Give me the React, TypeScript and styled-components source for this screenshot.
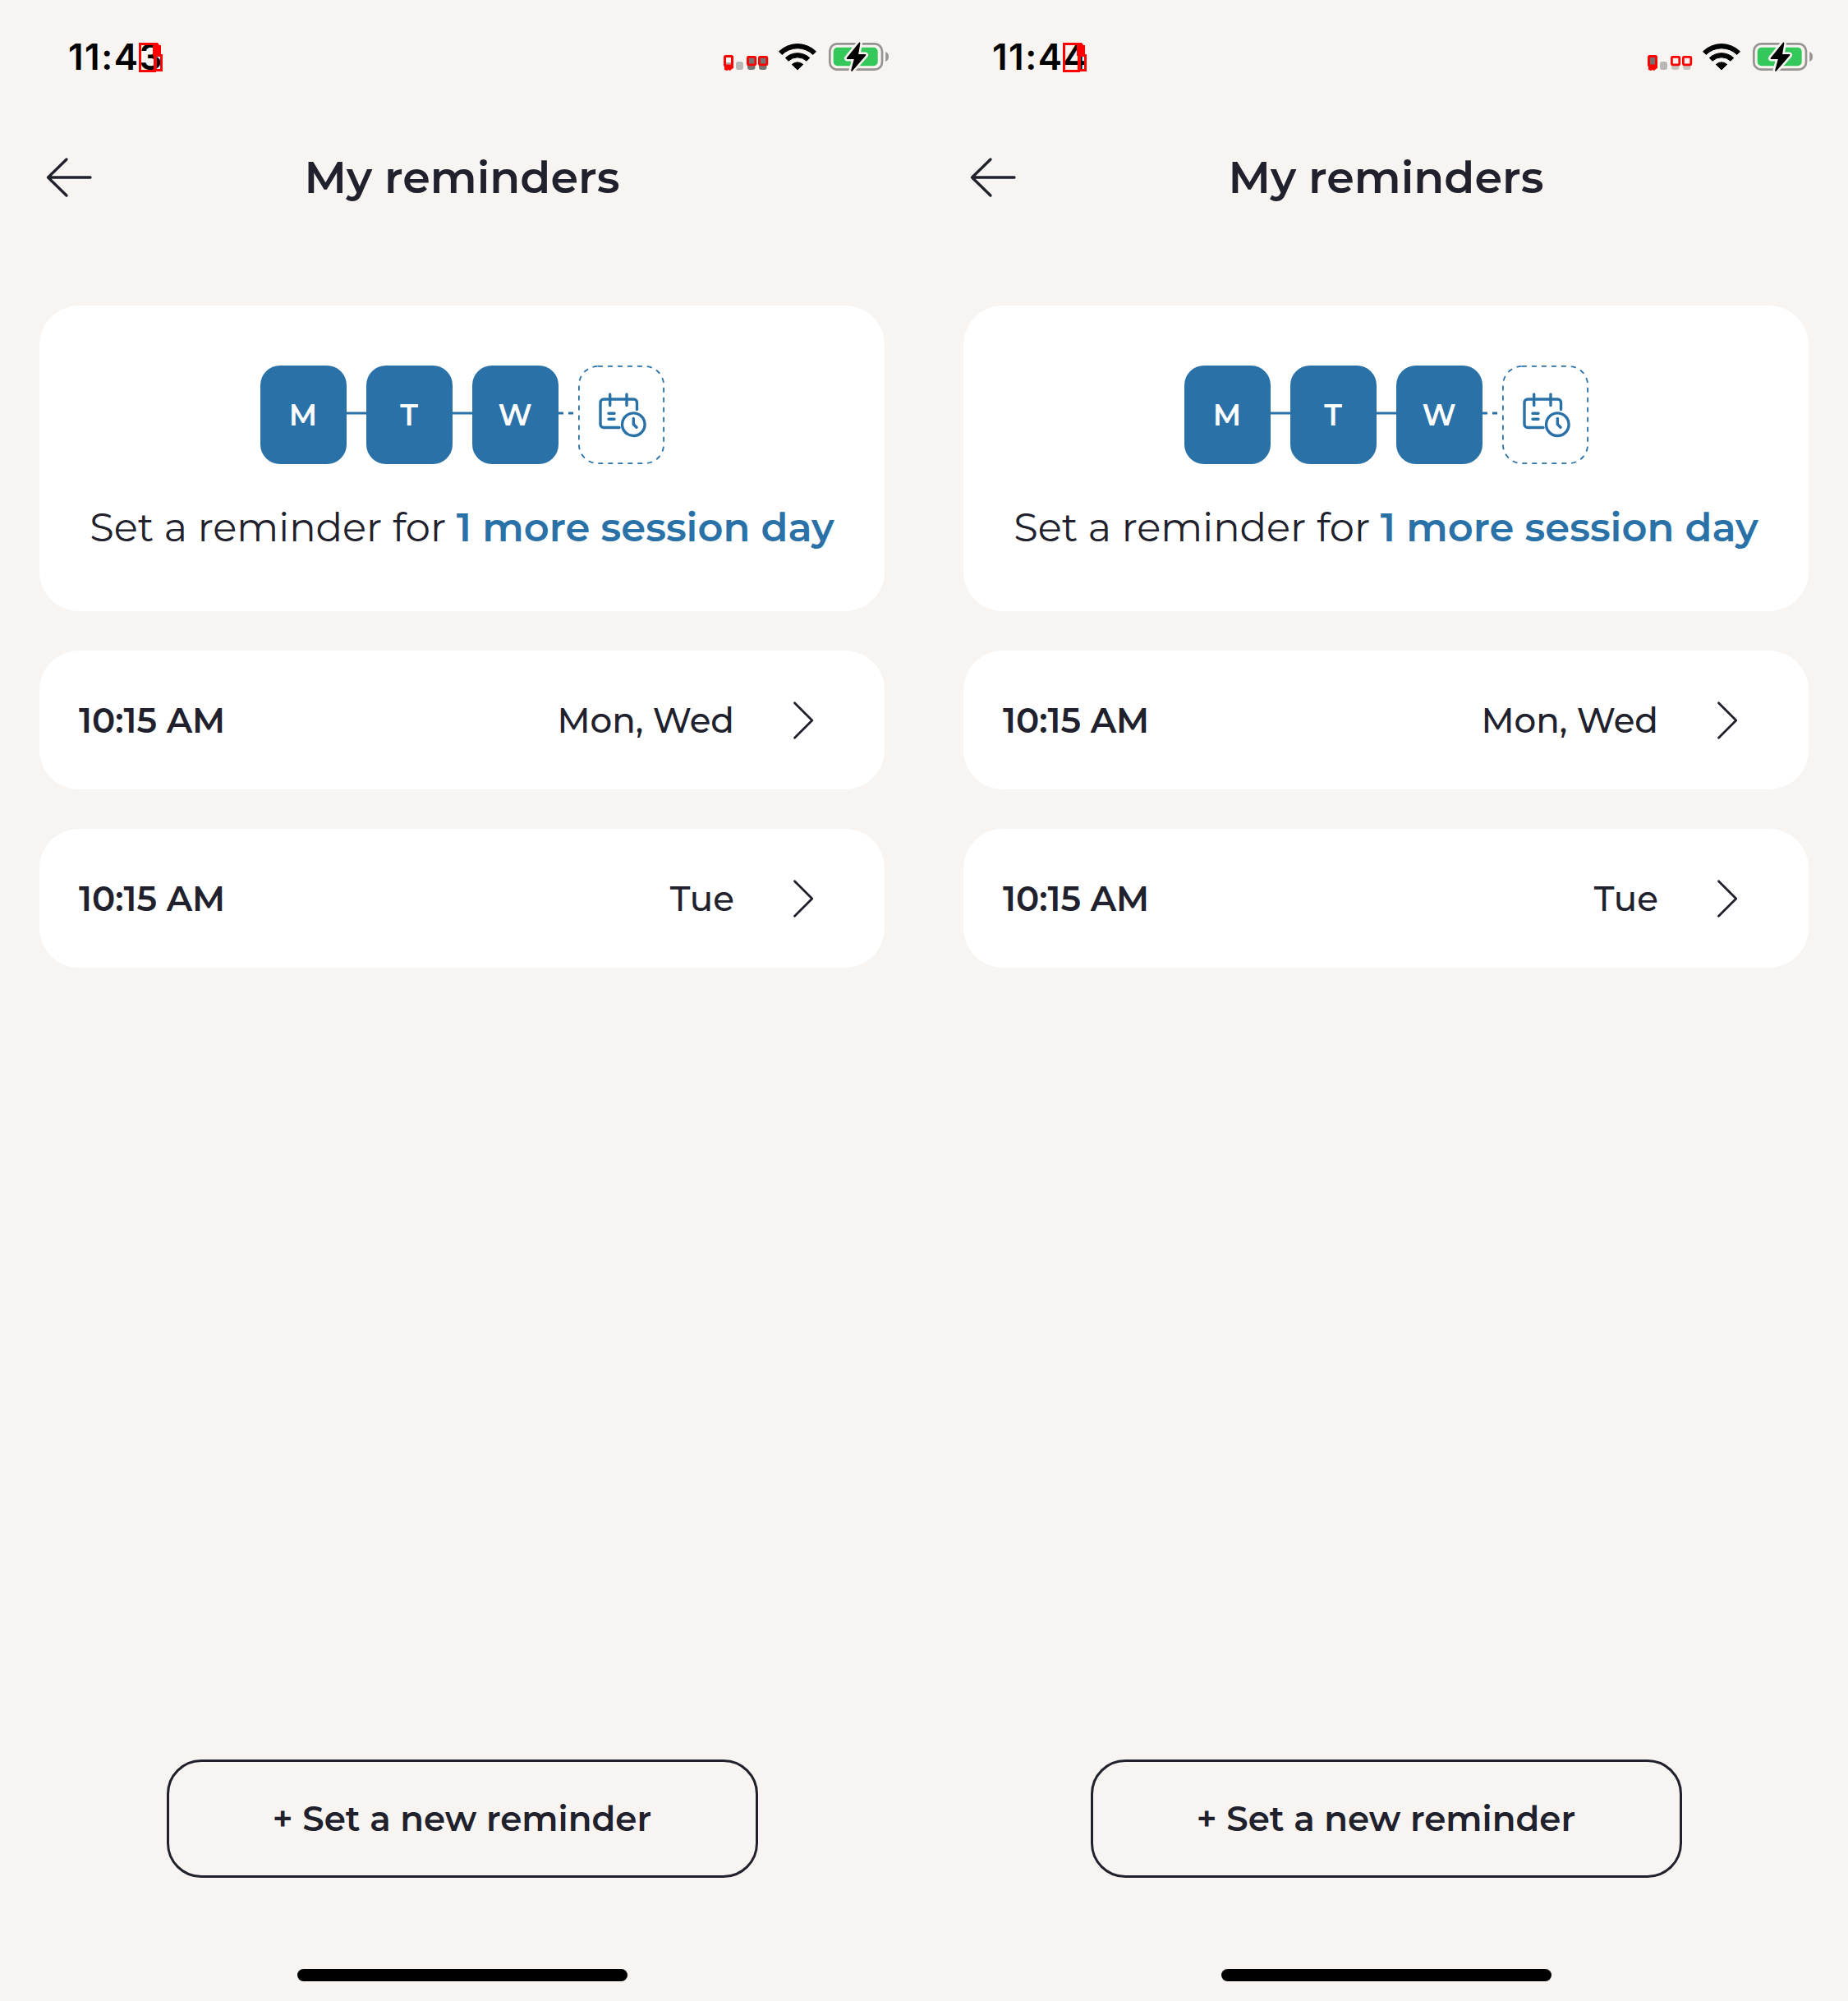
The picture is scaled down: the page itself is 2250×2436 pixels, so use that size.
import React from "react";
import styled, { createGlobalStyle } from "styled-components";

const color = {
  canvas: "#f7f4f1",
  card: "#ffffff",
  ink: "#20212c",
  blue: "#2a71a8",
  mark: "#ff0000",
  battery: "#34c759",
  outline: "#969391",
};

const GlobalStyle = createGlobalStyle`
  *, *::before, *::after { box-sizing: border-box; }
  body {
    margin: 0;
    background: ${color.canvas};
    color: ${color.ink};
    font-family: Montserrat, Inter, "Open Sans", sans-serif;
  }
  svg { display: block; flex: none; overflow: visible; }
`;

const Board = styled.div`
  display: flex;
  width: 2250px;
  height: 2436px;
  overflow: hidden;
`;

const Phone = styled.section`
  display: flex;
  flex-direction: column;
  width: 1125px;
  height: 2436px;
  background: ${color.canvas};
`;

const StatusBar = styled.div`
  display: flex;
  align-items: center;
  justify-content: space-between;
  height: 138px;
  padding: 0 43px 0 83px;
`;

const Clock = styled.time`
  position: relative;
  color: #000;
  font: 600 44px/54px Inter, "Liberation Sans", sans-serif;
  letter-spacing: 1.5px;
`;

const ClockMark = styled.svg`
  position: absolute;
  left: 85px;
  top: 9px;
`;

const StatusIcons = styled.div`
  display: flex;
  align-items: center;
`;

const SignalSlot = styled.div`
  padding-top: 15px;
`;

const WifiSlot = styled.div`
  margin: 0 14px 0 12px;
`;

const Header = styled.header`
  display: grid;
  grid-template-columns: 110px 1fr 110px;
  align-items: center;
  height: 156px;
`;

const BackButton = styled.button`
  display: flex;
  align-items: center;
  padding: 0 0 0 56px;
  border: 0;
  background: none;
`;

const Title = styled.h1`
  margin: 0;
  font-size: 54px;
  font-weight: 600;
  line-height: 66px;
  text-align: center;
`;

const Content = styled.main`
  display: flex;
  flex: 1;
  flex-direction: column;
  gap: 48px;
  padding: 78px 48px 0;
`;

const SummaryCard = styled.div`
  display: flex;
  flex-direction: column;
  align-items: center;
  height: 372px;
  padding-top: 73px;
  border-radius: 48px;
  background: ${color.card};
`;

const DayChain = styled.div`
  display: flex;
  align-items: flex-start;
`;

const DayTile = styled.div`
  display: flex;
  align-items: center;
  justify-content: center;
  width: 105px;
  height: 120px;
  border-radius: 24px;
  background: ${color.blue};
  color: #fff;
  font-size: 36px;
  font-weight: 600;
  line-height: 44px;
`;

const Connector = styled.div<{ $dashed?: boolean }>`
  width: 24px;
  height: 3px;
  margin-top: 56px;
  transform: translateY(0.5px);
  background: ${(p) =>
    p.$dashed
      ? `repeating-linear-gradient(90deg, ${color.blue} 0 6px, transparent 6px 12px)`
      : color.blue};
`;

const Summary = styled.p`
  margin: 47px 0 0;
  font-size: 48px;
  font-weight: 400;
  line-height: 60px;
  white-space: nowrap;
`;

const Highlight = styled.strong`
  color: ${color.blue};
  font-weight: 600;
`;

const ReminderRow = styled.div`
  display: flex;
  align-items: center;
  height: 169px;
  padding: 0 86px 0 48px;
  border-radius: 48px;
  background: ${color.card};
  font-size: 42px;
  line-height: 52px;
`;

const ReminderTime = styled.span`
  flex: 1;
  font-weight: 600;
`;

const ReminderDays = styled.span`
  margin-right: 71px;
  font-weight: 500;
`;

const Footer = styled.footer`
  display: flex;
  flex-direction: column;
  align-items: center;
  justify-content: space-between;
  height: 294px;
  padding-bottom: 24px;
`;

const NewReminderButton = styled.button`
  width: 720px;
  height: 144px;
  padding: 0;
  border: 3px solid ${color.ink};
  border-radius: 42px;
  background: none;
  color: ${color.ink};
  font: inherit;
  font-size: 42px;
  font-weight: 600;
  line-height: 52px;
`;

const HomeIndicator = styled.div`
  width: 402px;
  height: 15px;
  border-radius: 8px;
  background: #000;
`;

function ClockHighlight() {
  return (
    <ClockMark width="32" height="38" viewBox="168 51 32 38" fill="none" stroke={color.mark}>
      <rect x="170.5" y="53.5" width="18" height="33" strokeWidth="3" />
      <path d="M186 52h6l2 3h2v13h-10z" fill={color.mark} stroke="none" />
      <path d="M189 66v20.5M189.5 67.5h7v18h-7z" strokeWidth="3" />
    </ClockMark>
  );
}

function SignalIcon({ strong }: { strong: boolean }) {
  const first = strong ? color.canvas : "#707070";
  const bars = strong ? "#777573" : color.canvas;
  const feet = strong ? "#777573" : "#c6c3c1";
  return (
    <svg width="54" height="20" viewBox="881 67 54 20">
      <rect x="882.5" y="68.5" width="9" height="13" fill={first} />
      {strong && <rect x="884" y="76" width="6" height="4" fill="#aaa7a5" />}
      <rect x="882.5" y="68.5" width="9" height="11.5" rx="1" fill="none" stroke={color.mark} strokeWidth="3" />
      <path d="M882 80h11v3l-2 1-2 2-2-1-2 1-3-1z" fill={color.mark} />
      <rect x="896" y="75" width="9" height="10" rx="3" fill="#b9b6b4" />
      <rect x="910" y="74" width="9.5" height="11" rx="3" fill={feet} />
      <rect x="924" y="74" width="9.5" height="11" rx="3" fill={feet} />
      <g fill={bars} stroke={color.mark} strokeWidth="2.8">
        <rect x="910.4" y="69.4" width="9.4" height="9.4" rx="1" />
        <rect x="924.4" y="69.4" width="9.4" height="9.4" rx="1" />
      </g>
    </svg>
  );
}

function WifiIcon() {
  return (
    <svg width="48" height="34" viewBox="-24 -33.5 48 34" fill="#000">
      <g stroke="#000" strokeWidth="1" strokeLinejoin="round">
        <path d="M-22.5 -22.8A32.3 32.3 0 0 1 22.5 -22.8L18.8 -19.1A27 27 0 0 0 -18.8 -19.1Z" />
        <path d="M-14.7 -15A21.5 21.5 0 0 1 14.7 -15L11 -11.3A16 16 0 0 0 -11 -11.3Z" />
        <path d="M-6.7 -7A9.8 9.8 0 0 1 6.7 -7L0 -0.5Z" />
      </g>
    </svg>
  );
}

function BatteryIcon() {
  const bolt = "M1046.5 52.5L1031.5 71h9.5L1037 86L1053.5 67H1044z";
  return (
    <svg width="73" height="36" viewBox="1009 51 73 36" strokeLinejoin="round">
      <rect x="1010.3" y="53.3" width="63.7" height="31.4" rx="9" fill="none" stroke={color.outline} strokeWidth="2.7" />
      <path d="M1078.2 63c2.6 1 3.8 3.2 3.8 6s-1.2 5-3.8 6z" fill={color.outline} />
      <rect x="1014.7" y="57.7" width="54" height="22.6" rx="5" fill={color.battery} />
      <path d={bolt} fill={color.canvas} stroke={color.canvas} strokeWidth="7" />
      <path d={bolt} fill="#000" stroke="#000" strokeWidth="1.8" />
    </svg>
  );
}

function BackArrow() {
  return (
    <svg width="56" height="50" viewBox="55.5 191 56 50" fill="none" stroke={color.ink} strokeWidth="3.3" strokeLinecap="round" strokeLinejoin="round">
      <path d="M109.5 216H58M80.5 194L58 216L80.5 238" />
    </svg>
  );
}

function Chevron() {
  return (
    <svg width="26" height="48" viewBox="965 852.7 26 48" fill="none" stroke={color.ink} strokeWidth="2.8" strokeLinecap="round" strokeLinejoin="round">
      <path d="M967.5 855.5L988.8 876.7L967.5 898" />
    </svg>
  );
}

/* The still-unscheduled day: dashed outline with a calendar and clock inside. */
function EmptyDay() {
  return (
    <svg width="105" height="120" viewBox="704 445 105 120" fill="none" stroke={color.blue} strokeLinecap="round" strokeLinejoin="round">
      <rect x="704.9" y="445.9" width="103.2" height="118.2" rx="23" strokeWidth="1.8" strokeDasharray="6 6" strokeLinecap="butt" />
      <g strokeWidth="3.4">
        <path d="M775.5 498.5V490a4 4 0 0 0 -4 -4H735a4 4 0 0 0 -4 4V516.5a4 4 0 0 0 4 4H754" />
        <path d="M742.7 480V493.5M763 480V493.5M741 503.2H748M741 510.2H748" />
        <circle cx="771.3" cy="516.7" r="13.8" />
        <path d="M771.3 509.5V516.5L775 520.3" />
      </g>
    </svg>
  );
}

type ScreenProps = { time: string; strongSignal: boolean };

const reminders = [
  { time: "10:15 AM", days: "Mon, Wed" },
  { time: "10:15 AM", days: "Tue" },
];

function RemindersScreen({ time, strongSignal }: ScreenProps) {
  return (
    <Phone>
      <StatusBar>
        <Clock>
          {time}
          <ClockHighlight />
        </Clock>
        <StatusIcons>
          <SignalSlot>
            <SignalIcon strong={strongSignal} />
          </SignalSlot>
          <WifiSlot>
            <WifiIcon />
          </WifiSlot>
          <BatteryIcon />
        </StatusIcons>
      </StatusBar>
      <Header>
        <BackButton aria-label="Back">
          <BackArrow />
        </BackButton>
        <Title>My reminders</Title>
      </Header>
      <Content>
        <SummaryCard>
          <DayChain>
            <DayTile>M</DayTile>
            <Connector />
            <DayTile>T</DayTile>
            <Connector />
            <DayTile>W</DayTile>
            <Connector $dashed />
            <EmptyDay />
          </DayChain>
          <Summary>
            Set a reminder for <Highlight>1 more session day</Highlight>
          </Summary>
        </SummaryCard>
        {reminders.map((r) => (
          <ReminderRow key={r.days}>
            <ReminderTime>{r.time}</ReminderTime>
            <ReminderDays>{r.days}</ReminderDays>
            <Chevron />
          </ReminderRow>
        ))}
      </Content>
      <Footer>
        <NewReminderButton>+ Set a new reminder</NewReminderButton>
        <HomeIndicator />
      </Footer>
    </Phone>
  );
}

export default function App() {
  return (
    <>
      <GlobalStyle />
      <Board>
        <RemindersScreen time="11:43" strongSignal />
        <RemindersScreen time="11:44" strongSignal={false} />
      </Board>
    </>
  );
}
